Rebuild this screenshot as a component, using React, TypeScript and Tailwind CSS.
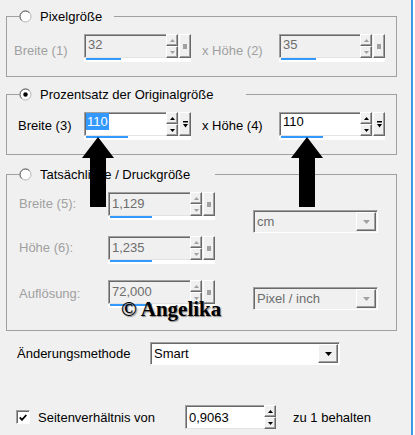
import React from 'react';

function Radio({ checked = false }: { checked?: boolean }) {
  return (
    <svg width="13" height="13" viewBox="0 0 13 13" className="shrink-0">
      <circle cx="6.5" cy="6.5" r="5.5" fill="#fff" stroke="#b4b4b4" />
      <path d="M2.6 10.4A5.5 5.5 0 0 1 10.4 2.6" fill="none" stroke="#5f5f5f" />
      {checked && <circle cx="6.5" cy="6.5" r="2.2" fill="#000" />}
    </svg>
  );
}

function Tri({ up = false, color, w = 5, h = 3 }: { up?: boolean; color: string; w?: number; h?: number }) {
  return (
    <svg width={w} height={h} viewBox={`0 0 ${w} ${h}`}>
      <polygon points={up ? `${w / 2},0 ${w},${h} 0,${h}` : `0,0 ${w},0 ${w / 2},${h}`} fill={color} />
    </svg>
  );
}

function Btn({ className = '', children }: { className?: string; children?: React.ReactNode }) {
  return (
    <div
      className={`flex items-center justify-center border border-t-white border-l-white border-r-[#696969] border-b-[#696969] bg-[#f0f0f0] shadow-[inset_-1px_-1px_0_#a0a0a0] ${className}`}
    >
      {children}
    </div>
  );
}

function SpinField({
  value,
  box,
  bar,
  off = false,
  selected = false,
  extra = true,
  pad = 'pt-0',
}: {
  value: string;
  box: string;
  bar?: string;
  off?: boolean;
  selected?: boolean;
  extra?: boolean;
  pad?: string;
}) {
  const glyph = off ? '#a0a0a0' : '#000';
  return (
    <div className="flex shrink-0 flex-col">
      <div className="flex h-[24px]">
        <div
          className={`h-full border-t border-l border-b border-t-[#a0a0a0] border-l-[#a0a0a0] border-b-[#e3e3e3] pl-[1px] leading-[17px] shadow-[inset_1px_1px_0_#696969] ${pad} ${
            off ? 'bg-[#f0f0f0] text-[#6d6d6d]' : 'bg-white text-black'
          } ${box}`}
        >
          {selected ? (
            <span className="inline-block h-[17px] bg-[#3399ff] px-[1px] text-white">{value}</span>
          ) : (
            <span className="pl-[2px]">{value}</span>
          )}
        </div>
        <div className="flex w-[12px] flex-col">
          <Btn className="h-[12px]">
            <Tri up color={glyph} />
          </Btn>
          <Btn className="h-[12px]">
            <Tri color={glyph} />
          </Btn>
        </div>
        {extra && (
          <Btn className="ml-[1px] h-full w-[12px]">
            {off ? (
              <div className="h-[5px] w-[4px] bg-[#a0a0a0]" />
            ) : (
              <svg width="5" height="7" viewBox="0 0 5 7">
                <rect x="0" y="0" width="5" height="1.5" fill="#000" />
                <polygon points="0,3 5,3 2.5,6.5" fill="#000" />
              </svg>
            )}
          </Btn>
        )}
      </div>
      {bar && (
        <div className="h-[4px] bg-white">
          <div className={`ml-[2px] h-[2px] bg-[#3399ff] ${bar}`} />
        </div>
      )}
    </div>
  );
}

function Combo({ value, off = false, className = '' }: { value: string; off?: boolean; className?: string }) {
  return (
    <div
      className={`flex shrink-0 border border-t-[#a0a0a0] border-l-[#a0a0a0] border-b-white border-r-white p-[1px] shadow-[inset_1px_1px_0_#696969] ${
        off ? 'bg-[#f0f0f0] text-[#6d6d6d]' : 'bg-white text-black'
      } ${className}`}
    >
      <span className="flex-1 pl-[2px] leading-[19px]">{value}</span>
      <Btn className="h-full w-[20px]">
        <Tri color={off ? '#a0a0a0' : '#000'} w={7} h={4} />
      </Btn>
    </div>
  );
}

function Arrow({ className }: { className: string }) {
  return (
    <svg width="36" height="74" viewBox="0 0 36 74" className={`absolute blur-[0.6px] ${className}`}>
      <polygon points="18,1 34,22 26,22 26,71 10,71 10,22 2,22" fill="#000" />
    </svg>
  );
}

export default function App() {
  return (
    <div className="relative flex h-[435px] w-[415px] overflow-hidden bg-[#f0f0f0] font-['Liberation_Sans',Arial,sans-serif] text-[13px] leading-[15px] text-black">
      <div className="flex w-[411px] flex-col pl-[6px] pt-[8px]">
        {/* Pixelgröße */}
        <fieldset className="w-[391px] border border-[#a0a0a0] pb-[14px]">
          <legend className="ml-[12px] pr-[12px]">
            <div className="flex h-[17px] items-center">
              <Radio />
              <span className="ml-[8px]">Pixelgröße</span>
            </div>
          </legend>
          <div className="mt-[9px] flex items-start">
            <span className="ml-[7px] mt-[9px] w-[70px] text-[#a0a0a0]">Breite (1)</span>
            <SpinField value="32" off box="w-[82px]" bar="w-[35px]" pad="pt-[1px]" />
            <span className="ml-[11px] mt-[9px] w-[77px] text-[#a0a0a0]">x Höhe (2)</span>
            <SpinField value="35" off box="w-[81px]" bar="w-[35px]" pad="pt-[1px]" />
          </div>
        </fieldset>

        {/* Prozentsatz */}
        <fieldset className="mt-[9px] w-[391px] border border-[#a0a0a0] pb-[14px]">
          <legend className="ml-[12px] pr-[33px]">
            <div className="flex h-[17px] items-center">
              <Radio checked />
              <span className="ml-[8px]">Prozentsatz der Originalgröße</span>
            </div>
          </legend>
          <div className="mt-[9px] flex items-start">
            <span className="ml-[11px] mt-[6px] w-[66px]">Breite (3)</span>
            <SpinField value="110" selected box="w-[82px]" bar="w-[42px]" />
            <span className="ml-[11px] mt-[6px] w-[77px]">x Höhe (4)</span>
            <SpinField value="110" box="w-[81px]" bar="w-[42px]" />
          </div>
        </fieldset>

        {/* Tatsächliche / Druckgröße */}
        <fieldset className="mt-[11px] w-[391px] border border-[#a0a0a0] pb-[20px]">
          <legend className="ml-[12px] pr-[25px]">
            <div className="flex h-[17px] items-center">
              <Radio />
              <span className="ml-[8px]">Tatsächliche / Druckgröße</span>
            </div>
          </legend>
          <div className="mt-[9px] flex items-start">
            <div className="flex flex-col gap-[16px]">
              <div className="flex items-start">
                <span className="ml-[12px] mt-[4px] w-[89px] text-[#a0a0a0]">Breite (5):</span>
                <SpinField value="1,129" off box="w-[82px]" bar="w-[42px]" pad="pt-[2px]" />
              </div>
              <div className="flex items-start">
                <span className="ml-[12px] mt-[4px] w-[89px] text-[#a0a0a0]">Höhe (6):</span>
                <SpinField value="1,235" off box="w-[82px]" bar="w-[42px]" pad="pt-[2px]" />
              </div>
              <div className="flex items-start">
                <span className="ml-[12px] mt-[6px] w-[89px] text-[#a0a0a0]">Auflösung:</span>
                <SpinField value="72,000" off box="w-[82px]" bar="w-[42px]" pad="pt-[2px]" />
              </div>
            </div>
            <div className="ml-[38px] flex flex-col">
              <Combo value="cm" off className="mt-[18px] h-[23px] w-[125px]" />
              <Combo value="Pixel / inch" off className="mt-[54px] h-[23px] w-[125px]" />
            </div>
          </div>
        </fieldset>

        {/* Änderungsmethode */}
        <div className="mt-[11px] flex items-center">
          <span className="ml-[11px] w-[133px]">Änderungsmethode</span>
          <Combo value="Smart" className="h-[23px] w-[190px]" />
        </div>

        {/* Seitenverhältnis */}
        <div className="mt-[40px] flex items-center">
          <div className="ml-[10px] flex h-[14px] w-[14px] items-center justify-center border border-t-[#a0a0a0] border-l-[#a0a0a0] border-r-white border-b-white bg-white shadow-[inset_1px_1px_0_#696969]">
            <svg width="8" height="7" viewBox="0 0 8 7">
              <path d="M0.8 3.4 L3 5.8 L7.3 1" stroke="#000" strokeWidth="1.8" fill="none" />
            </svg>
          </div>
          <span className="ml-[8px] w-[147px]">Seitenverhältnis von</span>
          <SpinField value="0,9063" box="w-[79px]" extra={false} pad="pt-[3px]" />
          <span className="ml-[17px]">zu 1 behalten</span>
        </div>
      </div>
      <div className="w-[2px] bg-[#3d9ae6]" />
      <div className="w-[2px] bg-white" />

      {/* overlays */}
      <Arrow className="left-[80px] top-[136px]" />
      <Arrow className="left-[289px] top-[136px]" />
      <div className="absolute left-[121px] top-[299px] font-['Liberation_Serif',serif] text-[21px] font-bold leading-[21px] text-black [text-shadow:1px_1px_1px_#8a8a8a]">
        © Angelika
      </div>
    </div>
  );
}
